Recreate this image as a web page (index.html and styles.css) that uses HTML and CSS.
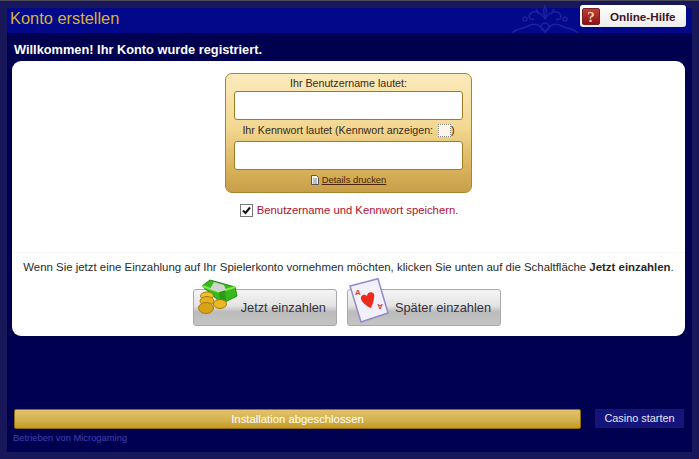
FILE: index.html
```html
<!DOCTYPE html>
<html lang="de">
<head>
<meta charset="utf-8">
<title>Konto erstellen</title>
<link rel="stylesheet" href="styles.css">
</head>
<body>
<div class="frame">
  <header class="header">
    <h1 class="title">Konto erstellen</h1>
    <svg class="ornament" width="90" height="28" viewBox="0 0 90 28" fill="none" stroke="#1a22a0" stroke-width="1.5">
      <path d="M45 1c-2 4-2 7 0 11 2-4 2-7 0-11z"/>
      <path d="M45 14c-3-6-9-9-14-6-4 3-1 8 3 6M45 14c3-6 9-9 14-6 4 3 1 8-3 6"/>
      <path d="M36 4l3 5M54 4l-3 5"/>
      <path d="M45 28c-3-8-10-11-17-7-5 3-11 2-16 7M45 28c3-8 10-11 17-7 5 3 11 2 16 7"/>
      <circle cx="45" cy="22" r="4"/>
      <circle cx="25" cy="14" r="2"/>
      <circle cx="65" cy="14" r="2"/>
    </svg>
    <a class="help">
      <svg class="help-icon" width="18" height="17" viewBox="0 0 18 17">
        <defs><linearGradient id="r" x1="0" y1="0" x2="0" y2="1"><stop offset="0" stop-color="#c24040"/><stop offset="1" stop-color="#8a1010"/></linearGradient></defs>
        <rect x="0.5" y="0.5" width="17" height="16" rx="1.5" fill="url(#r)" stroke="#7a2020"/>
        <text x="9" y="14" text-anchor="middle" class="help-q">?</text>
      </svg>
      <span>Online-Hilfe</span>
    </a>
  </header>
  <main class="main">
    <h2 class="welcome">Willkommen! Ihr Konto wurde registriert.</h2>
    <section class="panel">
      <div class="cred">
        <label class="cred-label">Ihr Benutzername lautet:</label>
        <div class="field"></div>
        <label class="cred-label second">Ihr Kennwort lautet (Kennwort anzeigen: <span class="showbox"></span>)</label>
        <div class="field"></div>
        <div class="print">
          <svg width="8" height="10" viewBox="0 0 8 10"><path d="M.5.5h5l2 2v7h-7z" fill="#f4f4f4" stroke="#555"/><path d="M2 4h4M2 6h4M2 8h4" stroke="#888"/></svg>
          <a class="print-link">Details drucken</a>
        </div>
      </div>
      <label class="save"><input class="save-box" type="checkbox" checked> Benutzername und Kennwort speichern.</label>
      <hr class="rule">
      <p class="note">Wenn Sie jetzt eine Einzahlung auf Ihr Spielerkonto vornehmen möchten, klicken Sie unten auf die Schaltfläche <b>Jetzt einzahlen</b>.</p>
      <div class="actions">
        <a class="btn btn-now">
          <svg class="btn-icon money" width="40" height="36" viewBox="0 0 40 36">
            <path d="M4 7 12 1l25 7 2 9-12 6-6-1z" fill="#38b81c" stroke="#1f8a10"/>
            <path d="M4 7l17 6 16-5" fill="none" stroke="#7cec4e" stroke-width="2"/>
            <path d="M21 13l1 9 6-1-1-10z" fill="#2a9a18"/>
            <path d="M16 3l10 3 2 5-7 2-9-3z" fill="#cfd4cf"/>
            <ellipse cx="9" cy="17" rx="6.5" ry="4" fill="#efc22c" stroke="#a67a10"/>
            <ellipse cx="9" cy="22" rx="7" ry="4.5" fill="#e4b01e" stroke="#a67a10"/>
            <ellipse cx="22" cy="25" rx="6.5" ry="4.5" fill="#eab822" stroke="#a67a10"/>
            <ellipse cx="8" cy="29" rx="7.5" ry="5.5" fill="#d8a216" stroke="#a67a10"/>
          </svg>
          <span>Jetzt einzahlen</span>
        </a>
        <a class="btn btn-later">
          <svg class="btn-icon card" width="42" height="46" viewBox="0 0 42 46">
            <path d="M1 8 29 .7l10 34.3L12 44z" fill="#f2f0fb" stroke="#8f8cc8" stroke-width="1.5"/>
            <path d="M22 30c-5-2-9-6-10-9-1-3 3-6 6-3 0-4 5-5 7-2 1 3-1 9-3 14z" fill="#ee2a1a"/>
            <text x="6" y="17" class="card-a">A</text>
            <text x="-34" y="-26" class="card-a" transform="rotate(180)">A</text>
          </svg>
          <span>Später einzahlen</span>
        </a>
      </div>
    </section>
    <div class="spacer"></div>
    <div class="status">
      <div class="progress">Installation abgeschlossen</div>
      <a class="start">Casino starten</a>
    </div>
    <div class="power">Betrieben von Microgaming</div>
  </main>
</div>
</body>
</html>
```
FILE: styles.css
```css
* { box-sizing: border-box; }
html, body { margin: 0; padding: 0; height: 100%; }
body {
  width: 699px;
  height: 459px;
  overflow: hidden;
  background: #17175a;
  font-family: "Liberation Sans", Arial, sans-serif;
  font-size: 12px;
}
.frame {
  height: 459px;
  border-top: 1px solid #4a4a5a;
  padding: 7px 7px 7px;
  display: flex;
  flex-direction: column;
}
.header {
  position: relative;
  height: 25px;
  flex: none;
  background: #02088a;
  margin: 0;
  padding: 0 0 6px 3px;
  display: flex;
  align-items: center;
}
.title {
  margin: 0;
  font-size: 16.4px;
  font-weight: 400;
  color: #d8b23a;
  line-height: 20px;
}
.ornament {
  position: absolute;
  right: 102px;
  bottom: 0;
}
.help {
  position: absolute;
  right: 6px;
  top: -3px;
  width: 106px;
  height: 22px;
  background: linear-gradient(#ffffff, #ececec);
  border-radius: 3px;
  display: flex;
  align-items: center;
  padding-left: 2px;
  gap: 10px;
  font-size: 11.7px;
  font-weight: 700;
  color: #40141e;
}
.help-icon { flex: none; }
.help-q { font: 700 15px "Liberation Serif", serif; fill: #f6d8a8; }
.main {
  flex: 1;
  min-height: 0;
  background: #000050;
  padding: 0 7px 0 5px;
  display: flex;
  flex-direction: column;
}
.welcome {
  margin: 9px 0 3px 2px;
  font-size: 12.8px;
  line-height: 16px;
  font-weight: 700;
  color: #fff;
}
.panel {
  height: 275px;
  flex: none;
  background: #fff;
  border-radius: 9px;
  padding-top: 12px;
  display: flex;
  flex-direction: column;
  align-items: center;
}
.cred {
  width: 247px;
  height: 120px;
  flex: none;
  padding: 2px 8px 0;
  border: 1px solid #a8842c;
  border-radius: 7px;
  background: linear-gradient(#fbeabc, #f3d892 45%, #d9b25c 80%, #c89f48);
  text-align: center;
  color: #3a2a1a;
}
.cred-label { display: block; line-height: 14px; font-size: 10.7px; margin-bottom: 1px; }
.cred-label.second { margin-top: 3px; margin-bottom: 4px; white-space: nowrap; }
.field {
  height: 29px;
  margin-top: 1px;
  background: #fff;
  border: 1px solid #a07c20;
  border-radius: 3px;
}
.showbox {
  display: inline-block;
  width: 13px;
  height: 13px;
  margin-left: 2px;
  vertical-align: -3px;
  background: #fbf6ea;
  border: 1px dotted #8a8a8a;
}
.print {
  display: flex;
  justify-content: center;
  align-items: center;
  gap: 3px;
  margin-top: 4px;
  font-size: 9.4px;
  line-height: 12px;
}
.print-link { color: #4a2408; text-decoration: underline; }
.save {
  margin: 9px 0 0 1px;
  display: flex;
  align-items: center;
  gap: 1px;
  height: 16px;
  color: #b01030;
  font-size: 11.3px;
  white-space: pre;
}
.save-box {
  appearance: none;
  margin: 0;
  width: 13px;
  height: 13px;
  border: 1px solid #7a7a7a;
  background: #fff url("data:image/svg+xml,%3Csvg xmlns='http://www.w3.org/2000/svg' width='11' height='11'%3E%3Cpath d='M2 5.5l2.5 2.5L9 2.5' fill='none' stroke='%23111' stroke-width='2'/%3E%3C/svg%3E") center no-repeat;
}
.rule {
  width: 100%;
  margin: 34px 0 0;
  border: 0;
  border-top: 1px solid #f6f6f6;
}
.note {
  margin: 7px 0 0;
  line-height: 14px;
  font-size: 11.43px;
  color: #2a2a2a;
  white-space: nowrap;
}
.actions {
  display: flex;
  gap: 10px;
  margin: 15px 3px 0 0;
}
.btn {
  position: relative;
  height: 37px;
  border: 1px solid #a8a8a8;
  border-radius: 3px;
  background: linear-gradient(#f4f4f4, #e4e4e4 45%, #bcbcbc 62%, #c4c4c4);
  display: flex;
  align-items: center;
  justify-content: flex-end;
  color: #33333f;
  font-size: 12.8px;
}
.btn-now { width: 144px; padding-right: 10px; }
.btn-later { width: 154px; padding-right: 9px; }
.btn-icon { position: absolute; }
.money { left: 4px; top: -11px; }
.card { left: 1px; top: -12px; }
.card-a { font: 700 8px "Liberation Sans", sans-serif; fill: #e0402a; }
.spacer { flex: 1; min-height: 0; }
.status {
  display: flex;
  align-items: flex-start;
  gap: 14px;
  padding-left: 2px;
}
.progress {
  width: 567px;
  height: 20px;
  border: 1px solid #8e6c12;
  border-radius: 2px;
  background: linear-gradient(#e0c268, #d6b452 50%, #c49a24);
  text-align: center;
  color: #fff;
  line-height: 18px;
  font-size: 11.3px;
}
.start {
  width: 89px;
  height: 19px;
  background: #14147a;
  text-align: center;
  color: #e4e4f4;
  line-height: 19px;
  font-size: 10.9px;
}
.power {
  margin: 3px 0 8px 1px;
  line-height: 12px;
  font-size: 9.4px;
  color: #4040b0;
}
```
